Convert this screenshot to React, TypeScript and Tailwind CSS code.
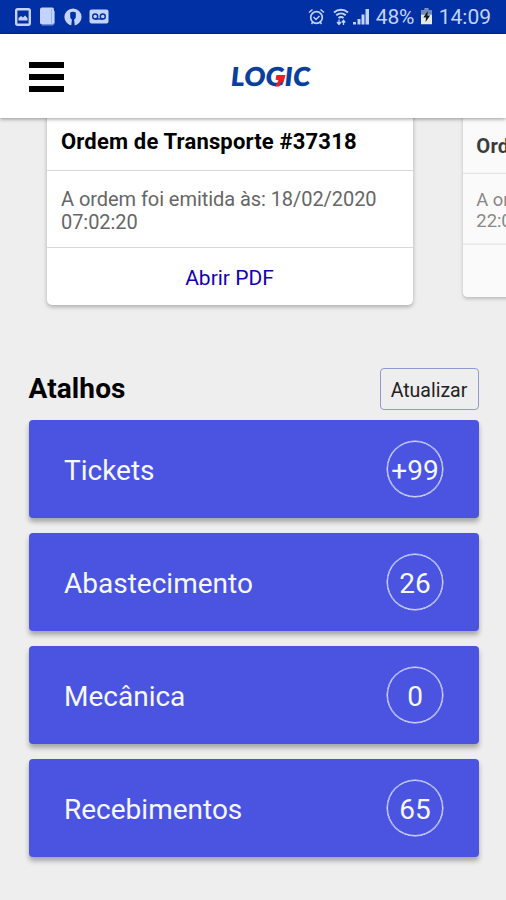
interface Shortcut {
  label: string
  count: string
}

interface OrderCardProps {
  title: string
  date: string
  time: string
}

const SHORTCUTS: Shortcut[] = [
  { label: 'Tickets', count: '+99' },
  { label: 'Abastecimento', count: '26' },
  { label: 'Mecânica', count: '0' },
  { label: 'Recebimentos', count: '65' },
]

function StatusBar() {
  return (
    <div className="flex h-[34px] shrink-0 items-center justify-between border-b border-[#1c1c9c] bg-[#0030a3] pl-[15px] pr-[15px] text-[#c3d3fb]">
      <div className="flex items-center gap-[8px]">
        {/* Gallery */}
        <svg className="h-[18px] w-4" viewBox="0 0 16 18">
          <rect x="1.2" y="1.2" width="13.6" height="15.6" rx="1.5" fill="none" stroke="currentColor" strokeWidth="2.4" />
          <path d="M3.5 12.5V10l2.5-2 2 1.5 2-2 2.5 2.5v2.5z" fill="currentColor" />
        </svg>
        {/* Document */}
        <svg className="h-[19px] w-[17px]" viewBox="0 0 17 19">
          <rect x="1" y="0.5" width="14" height="17" rx="2" fill="currentColor" />
          <path d="M12.5 2v14.5M3 18h11l1.5-2V4" fill="none" stroke="#8fa9e6" strokeWidth="0.8" />
        </svg>
        {/* Round app badge */}
        <svg className="h-[18px] w-[18px]" viewBox="0 0 18 18">
          <circle cx="9" cy="9" r="8.6" fill="currentColor" />
          <path d="M6.2 4.5v4c0 1.500.6 2.500 1.700 3L7.200 18h3.600l-.7-6.500c1.100-.5 1.700-1.500 1.700-3v-4c-1.500-1-4.100-1-5.600 0z" fill="#0030a3" />
        </svg>
        {/* Voicemail */}
        <svg className="-ml-px h-[15px] w-[20px]" viewBox="0 0 20 15">
          <rect x="0.5" y="0.5" width="19" height="14" rx="2" fill="currentColor" />
          <g fill="none" stroke="#0030a3" strokeWidth="1.4">
            <circle cx="6.2" cy="7.5" r="2.5" />
            <circle cx="13.8" cy="7.5" r="2.5" />
            <path d="M6 10h8" />
          </g>
        </svg>
      </div>

      <div className="flex items-center">
        {/* Alarm */}
        <svg className="h-[18px] w-[17px]" viewBox="0 0 17 18" fill="none" stroke="currentColor">
          <circle cx="8.5" cy="9.5" r="5.8" strokeWidth="1.7" />
          <path d="M1 4.5l3.5-3M16 4.5l-3.5-3M3.5 16l1.500-2M13.500 16L12 14" strokeWidth="1.5" />
          <path d="M5.5 9l2.5 2.5 3.5-3.5" strokeWidth="1.4" />
        </svg>
        {/* Wi-Fi */}
        <svg className="ml-[8px] h-[18px] w-[16px]" viewBox="0 0 16 18" fill="none" stroke="currentColor">
          <path d="M1 4.500c4.200-3.600 9.800-3.600 14 0M3.300 7.300c2.800-2.400 6.600-2.400 9.400 0M5.500 10c1.500-1.300 3.500-1.300 5 0" strokeWidth="2" />
          <path d="M6 11.500V16M4 14l2 2.500L8 14M10.500 17v-4.500M8.800 14.500l1.700-2.200 1.700 2.200" strokeWidth="1.300" />
        </svg>
        {/* Signal */}
        <svg className="ml-[4px] h-[17px] w-[17px]" viewBox="0 0 17 17" fill="currentColor">
          <path d="M0 14h3v2.500H0zM4.500 11H7.500v5.500h-3zM8.500 6.500h3v10h-3zM12.500 1H16v15.500h-3.500z" />
        </svg>
        <span className="ml-[6px] w-[40px] whitespace-nowrap pt-px text-[21px] leading-none tracking-[-0.1px]">48%</span>
        {/* Battery */}
        <svg className="ml-[5px] h-[17px] w-[11px]" viewBox="0 0 12 18">
          <path d="M4 0h4v2h4v15.500H0V2h4z" fill="#e4ecdf" />
          <path d="M0 2h4V0h4v2h4v5H0z" fill="#7289b8" />
          <path d="M7.500 3L2.500 10h3L5 15l5-7H7z" fill="#101828" />
        </svg>
        <span className="ml-[7px] whitespace-nowrap pt-px text-[21px] leading-none">14:09</span>
      </div>
    </div>
  )
}

function Logo() {
  return (
    <div className="relative h-[30px] w-[80px]">
      <span className="block origin-left -skew-x-6 whitespace-nowrap font-['Lato'] text-[26px] font-extrabold leading-[30px] tracking-[0.25px] text-[#0b3f9c]">
        LOGIC
      </span>
      <svg className="absolute left-[43px] top-[14px] h-[12px] w-[12px]" viewBox="0 0 12 12">
        <path d="M2.500 0H11.500L9.500 7.500 8 6.500 5 11.500H1L4.500 5.500 1.500 4.500z" fill="#ee1c25" />
      </svg>
    </div>
  )
}

function Header() {
  return (
    <header className="relative z-10 flex h-[84px] shrink-0 items-center bg-white pl-[28.5px] shadow-[0_1px_4px_rgba(0,0,0,0.4)]">
      <button type="button" aria-label="Menu" className="mr-[167px] flex w-[35.5px] flex-col gap-[6px] pt-[2px]">
        <span className="h-[6px] bg-black" />
        <span className="h-[6px] bg-black" />
        <span className="h-[6px] bg-black" />
      </button>
      <Logo />
    </header>
  )
}

function OrderCard({ title, date, time }: OrderCardProps) {
  return (
    <article className="h-[200px] w-[366px] shrink-0 rounded-[5px] bg-white shadow-[0_2px_4px_rgba(0,0,0,0.28)]">
      <h2 className="flex h-[65.5px] items-center whitespace-nowrap border-b border-[#d8d8d8] pl-[14.5px] pt-[8px] text-[22px] font-bold tracking-[0.17px] text-black">
        {title}
      </h2>
      <p className="h-[77px] border-b border-[#d8d8d8] pl-[14.5px] pt-[17px] text-[20px] leading-[23px] tracking-[-0.06px] text-[#666]">
        A ordem foi emitida às: {date}
        <br />
        {time}
      </p>
      <button type="button" className="flex h-[57.5px] w-full items-center justify-center pt-[4px] text-[21px] text-[#1200b4]">
        Abrir PDF
      </button>
    </article>
  )
}

export default function App() {
  return (
    <div className="flex h-[900px] w-[506px] flex-col overflow-hidden bg-[#eeeeee] font-['Roboto',sans-serif]">
      <StatusBar />
      <Header />

      {/* Transport orders carousel, scrolled under the header */}
      <section className="-mt-[13px] flex shrink-0 gap-[50.5px] pl-[46.5px]">
        <OrderCard title="Ordem de Transporte #37318" date="18/02/2020" time="07:02:20" />
        <div className="shrink-0 origin-left scale-[0.92] opacity-75">
          <OrderCard title="Ordem de Transporte #37317" date="17/02/2020" time="22:01:14" />
        </div>
      </section>

      <section className="mt-[63px] pl-[28.5px] pr-[27.5px]">
        <div className="flex h-[42px] items-center justify-between">
          <h1 className="text-[28px] font-bold leading-none tracking-[0.1px] text-black">Atalhos</h1>
          <button type="button" className="h-[42px] w-[99px] rounded-[4px] border border-[#8f9bd0] pt-[3px] text-[19.5px] text-[#222]">
            Atualizar
          </button>
        </div>
        <div className="mt-[10.4px] flex flex-col gap-[14.8px]">
          {SHORTCUTS.map((item) => (
            <button
              key={item.label}
              type="button"
              className="flex h-[98px] items-center justify-between rounded-[4px] bg-[#4b54e1] pl-[35.5px] pr-[35.5px] text-[28px] text-[#f6f8ff] shadow-[0_4px_5px_rgba(0,0,0,0.3)]"
            >
              <span className="pt-[4px]">{item.label}</span>
              <span className="flex h-[56px] w-[56px] items-center justify-center rounded-full border border-[#d5d9ff] pt-[4px] shadow-[0_0_0_0.5px_#d5d9ff]">
                {item.count}
              </span>
            </button>
          ))}
        </div>
      </section>
    </div>
  )
}
